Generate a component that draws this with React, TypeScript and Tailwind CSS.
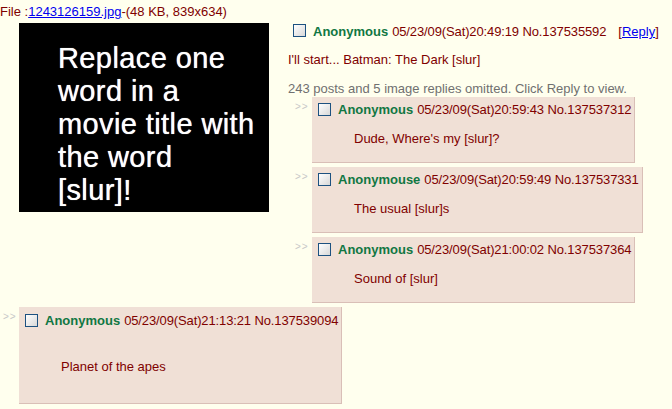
import React from "react";

const Checkbox = () => (
  <span className="inline-block w-[13px] h-[13px] border border-[#1c5180] bg-gradient-to-br from-white to-[#d8d8d8] shrink-0" />
);

type ReplyProps = {
  name: string;
  date: string;
  no: string;
  text: string;
  dashPad: string;
  dashW: string;
  topPad: string;
  textMt: string;
  bottomPad: string;
  textMl: string;
};

const Reply = ({ name, date, no, text, dashW, dashPad, topPad, textMt, bottomPad, textMl }: ReplyProps) => (
  <div className="flex items-start">
    <div className={`${dashW} ${dashPad} shrink-0 text-[10px] leading-[12px] text-[#c8c8c8] tracking-[1px] pt-[4px]`}>&gt;&gt;</div>
    <div className={`bg-[#f0e0d6] border-r border-b border-[#d9bfb7] pl-[6px] pr-[3px] ${topPad} ${bottomPad}`}>
      <div className="flex items-center h-[17px] whitespace-nowrap">
        <Checkbox />
        <span className="ml-[7px] font-bold text-[#117743]">{name}</span>
        <span className="ml-[4px] tracking-[-0.12px]">{date} No.{no}</span>
      </div>
      <div className={`${textMt} ${textMl} leading-[15px]`}>{text}</div>
    </div>
  </div>
);

export default function App() {
  return (
    <div
      className="w-[672px] h-[409px] overflow-hidden bg-[#ffffee] text-[#800000] text-[13px] leading-[15px]"
      style={{ fontFamily: '"Liberation Sans", Arial, sans-serif' }}
    >
      <div className="pt-[4px] whitespace-nowrap">
        File :<span className="text-[#0000ee] underline">1243126159.jpg</span>-(48 KB, 839x634)
      </div>
      <div className="flex items-start mt-[4px]">
        <div className="ml-[19px] w-[250px] h-[189px] bg-black shrink-0 pl-[39px] pt-[19px]">
          <div className="text-white text-[29px] leading-[33px] tracking-[0.4px] [text-shadow:0_0_0.7px_#fff]">
            Replace one<br />word in a<br />movie title with<br />the word<br />[slur]!
          </div>
        </div>
        <div className="ml-[19px] flex flex-col">
          <div className="flex items-center h-[17px] whitespace-nowrap">
            <span className="ml-[5px]"><Checkbox /></span>
            <span className="ml-[7px] font-bold text-[#117743]">Anonymous</span>
            <span className="ml-[4px] tracking-[-0.12px]">05/23/09(Sat)20:49:19 No.137535592</span>
            <span className="ml-[12px]">
              [<span className="text-[#0000ee] underline">Reply</span>]
            </span>
          </div>
          <div className="mt-[12px]">I'll start... Batman: The Dark [slur]</div>
          <div className="mt-[14px] text-[#707070]">243 posts and 5 image replies omitted. Click Reply to view.</div>
          <div className="mt-[1px] flex flex-col gap-[4px]">
            <Reply name="Anonymous" date="05/23/09(Sat)20:59:43" no="137537312" text="Dude, Where's my [slur]?" dashW="w-[24px]" dashPad="pl-[7px]" topPad="pt-[4px]" textMt="mt-[13px]" bottomPad="pb-[16px]" textMl="ml-[36px]" />
            <Reply name="Anonymouse" date="05/23/09(Sat)20:59:49" no="137537331" text="The usual [slur]s" dashW="w-[24px]" dashPad="pl-[7px]" topPad="pt-[4px]" textMt="mt-[13px]" bottomPad="pb-[16px]" textMl="ml-[36px]" />
            <Reply name="Anonymous" date="05/23/09(Sat)21:00:02" no="137537364" text="Sound of [slur]" dashW="w-[24px]" dashPad="pl-[7px]" topPad="pt-[4px]" textMt="mt-[13px]" bottomPad="pb-[16px]" textMl="ml-[36px]" />
          </div>
        </div>
      </div>
      <div className="mt-[4px]">
        <Reply name="Anonymous" date="05/23/09(Sat)21:13:21" no="137539094" text="Planet of the apes" dashW="w-[19px]" dashPad="pl-[3px]" topPad="pt-[5px]" textMt="mt-[30px]" bottomPad="pb-[29px]" textMl="ml-[36px]" />
      </div>
    </div>
  );
}
